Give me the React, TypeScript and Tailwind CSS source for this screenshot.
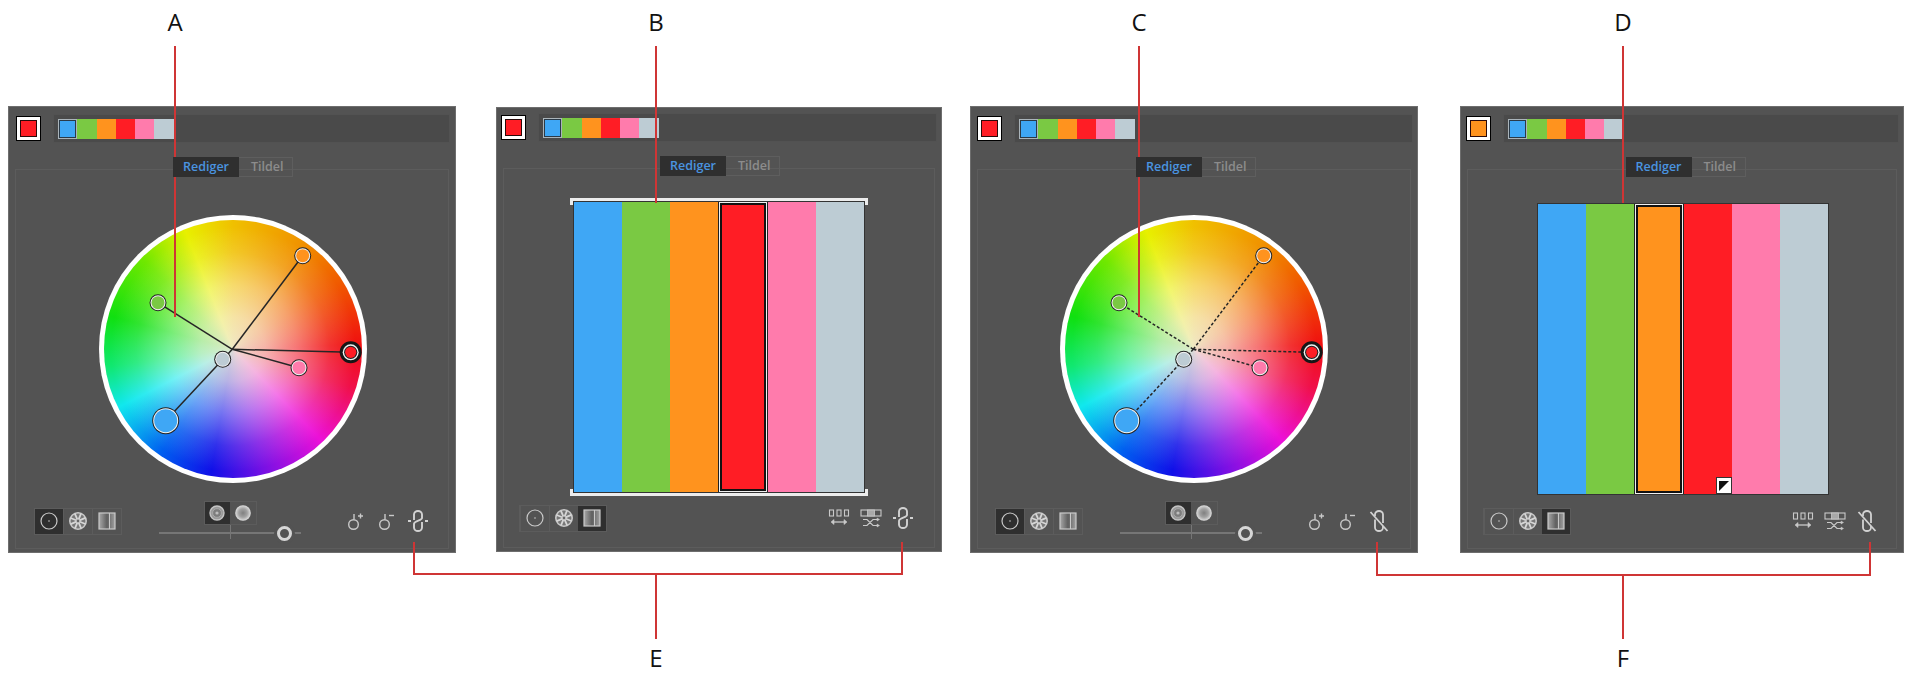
import React from "react";

const BLUE = "#3fa7f5";
const GREEN = "#7ac943";
const ORANGE = "#ff931e";
const RED = "#ff1d25";
const PINK = "#ff7bac";
const GRAY = "#bdccd4";

const swatches = [BLUE, GREEN, ORANGE, RED, PINK, GRAY];
const ICON = "#c9c9c9";

// Wheel handles, in wheel coordinates
const handles = [
  { x: 203.7, y: 40.7, r: 8.5, color: ORANGE },
  { x: 59, y: 87.7, r: 8.5, color: GREEN },
  { x: 200, y: 152.7, r: 8.5, color: PINK },
  { x: 123.7, y: 144.3, r: 8.5, color: GRAY },
  { x: 66.7, y: 205.7, r: 13.5, color: BLUE },
];
const redHandle = { x: 251.7, y: 137.3 };
const hub = { x: 133.3, y: 134.3 };

function ColorWheel({ dashed }: { dashed?: boolean }) {
  const spokes = [...handles.filter((h) => h.color !== GRAY), redHandle];
  return (
    <div className="relative w-[268px] h-[268px] rounded-full bg-white">
      <div className="absolute inset-[5px] rounded-full bg-[radial-gradient(circle_closest-side,rgba(240,236,214,0.92)_0%,rgba(248,242,228,0.72)_25%,rgba(255,255,255,0.42)_50%,rgba(255,255,255,0.14)_75%,rgba(255,255,255,0)_95%),conic-gradient(#f0c000_0deg,#f09400_32deg,#f05a00_58deg,#f01010_88deg,#f0104a_108deg,#ec10d8_136deg,#7a10e4_165deg,#1010e8_190deg,#0060f0_215deg,#10e8ee_243deg,#10e870_262deg,#10e010_285deg,#70e800_315deg,#e8f000_338deg,#f0c000_360deg)]" />
      <svg className="absolute inset-0" width="268" height="268" viewBox="0 0 268 268">
        {spokes.map((s, i) => (
          <line
            key={i}
            x1={hub.x}
            y1={hub.y}
            x2={s.x}
            y2={s.y}
            stroke="#262626"
            strokeWidth="1.5"
            strokeDasharray={dashed ? "3 2" : undefined}
          />
        ))}
        {handles.map((h, i) => (
          <g key={i}>
            <circle cx={h.x} cy={h.y} r={h.r} fill="#222" />
            <circle cx={h.x} cy={h.y} r={h.r - 1} fill="#f2f2f2" />
            <circle cx={h.x} cy={h.y} r={h.r - 2} fill={h.color} />
          </g>
        ))}
        <circle cx={redHandle.x} cy={redHandle.y} r="11" fill="#161616" />
        <circle cx={redHandle.x} cy={redHandle.y} r="8" fill="#f2f2f2" />
        <circle cx={redHandle.x} cy={redHandle.y} r="6.6" fill="#222" />
        <circle cx={redHandle.x} cy={redHandle.y} r="5.6" fill={RED} />
      </svg>
    </div>
  );
}

// ---- small icons ----
function CircleIcon() {
  return (
    <svg width="20" height="20" viewBox="0 0 20 20" fill="none">
      <circle cx="10" cy="10" r="8" stroke={ICON} strokeWidth="1.2" />
      <circle cx="10" cy="10" r="0.8" fill={ICON} />
    </svg>
  );
}

function SegmentIcon() {
  return (
    <svg width="20" height="20" viewBox="0 0 20 20" fill="none">
      <circle cx="10" cy="10" r="8.2" fill="#777" stroke={ICON} strokeWidth="1.6" />
      {[0, 45, 90, 135].map((a) => (
        <line key={a} x1="10" y1="2" x2="10" y2="18" stroke="#d6d6d6" strokeWidth="1.8" transform={`rotate(${a + 22} 10 10)`} />
      ))}
      <circle cx="10" cy="10" r="1.4" fill="#666" />
    </svg>
  );
}

function BarsIcon({ id }: { id: string }) {
  return (
    <svg width="20" height="20" viewBox="0 0 20 20" fill="none">
      <defs>
        <linearGradient id={id} x1="0" x2="1" y1="0" y2="0">
          <stop offset="0" stopColor="#a8a8a8" />
          <stop offset="0.5" stopColor="#5f5f5f" />
          <stop offset="1" stopColor="#a0a0a0" />
        </linearGradient>
      </defs>
      <rect x="2" y="2" width="16" height="16" fill={`url(#${id})`} stroke={ICON} strokeWidth="1.2" />
      <line x1="12.5" y1="2" x2="12.5" y2="18" stroke={ICON} strokeWidth="1" />
    </svg>
  );
}

function AddColorIcon({ minus }: { minus?: boolean }) {
  return (
    <svg width="22" height="22" viewBox="0 0 22 22" fill="none" stroke={ICON}>
      <circle cx="8.5" cy="14.5" r="4.8" strokeWidth="1.4" />
      <line x1="9" y1="9.5" x2="9" y2="4" strokeWidth="1.4" />
      {minus ? (
        <line x1="13" y1="5.5" x2="18" y2="5.5" strokeWidth="1.4" />
      ) : (
        <path d="M13 6h5M15.5 3.5v5" strokeWidth="1.4" />
      )}
    </svg>
  );
}

function LinkIcon({ off }: { off?: boolean }) {
  if (off) {
    return (
      <svg width="22" height="24" viewBox="0 0 22 24" fill="none" stroke="#d2d2d2" strokeWidth="1.8">
        <path d="M7 7V5.5a4 3.5 0 0 1 8 0V14" />
        <path d="M7 10.5v8a4 3.5 0 0 0 8 0V17" />
        <line x1="2.5" y1="3" x2="19.5" y2="22" />
      </svg>
    );
  }
  return (
    <svg width="22" height="24" viewBox="0 0 22 24" fill="none" stroke="#d2d2d2" strokeWidth="1.9">
      <path d="M7 11V5.5a4 3.5 0 0 1 8 0V9c0 2.5-8 3-8 6v3.5a4 3.5 0 0 0 8 0V13" />
      <path d="M1 12h3M18 12h3" strokeWidth="2" />
    </svg>
  );
}

function SpreadIcon() {
  return (
    <svg width="22" height="22" viewBox="0 0 22 22" fill="none" stroke={ICON}>
      <rect x="1.5" y="3" width="4" height="6" strokeWidth="1.1" />
      <rect x="9" y="3" width="4" height="6" strokeWidth="1.1" />
      <rect x="16.5" y="3" width="4" height="6" strokeWidth="1.1" />
      <path d="M5 15h12" strokeWidth="1.3" />
      <path d="M6 12.5 3 15l3 2.5zM16 12.5l3 2.5-3 2.5z" fill={ICON} strokeWidth="0.6" />
    </svg>
  );
}

function ShuffleIcon() {
  return (
    <svg width="22" height="22" viewBox="0 0 22 22" fill="none" stroke={ICON}>
      <rect x="1" y="3" width="20" height="6" strokeWidth="1.1" />
      <rect x="7.5" y="3" width="7" height="6" fill="#a8a8a8" strokeWidth="0.8" />
      <path d="M3 12.5h4l6 6h5M3 18.5h4l6-6h5" strokeWidth="1.2" />
      <path d="M17 11l2.5 1.5L17 14zM17 17l2.5 1.5L17 20z" fill={ICON} strokeWidth="0.5" />
    </svg>
  );
}

function ToneIconA() {
  return (
    <svg width="18" height="18" viewBox="0 0 18 18" fill="none">
      <circle cx="9" cy="9" r="7" fill="#9a9a9a" stroke="#c4c4c4" strokeWidth="1.4" />
      <circle cx="9" cy="9" r="4.4" fill="#7d7d7d" stroke="#a8a8a8" strokeWidth="1" />
      <circle cx="9" cy="9" r="1.6" fill="#bdbdbd" />
    </svg>
  );
}

function ToneIconB() {
  return (
    <svg width="18" height="18" viewBox="0 0 18 18">
      <defs>
        <radialGradient id="toneB">
          <stop offset="0" stopColor="#808080" />
          <stop offset="0.55" stopColor="#a2a2a2" />
          <stop offset="1" stopColor="#e0e0e0" />
        </radialGradient>
      </defs>
      <circle cx="9" cy="9" r="7.8" fill="url(#toneB)" />
    </svg>
  );
}

function ModeGroup({ active, id }: { active: number; id: string }) {
  const items = [<CircleIcon />, <SegmentIcon />, <BarsIcon id={id} />];
  return (
    <div className="flex w-[88px] h-[27px] border border-[#5c5c5c]">
      {items.map((icon, i) => (
        <div
          key={i}
          className={`flex-1 flex items-center justify-center ${active === i ? "bg-[#2f2f2f]" : "border-l border-[#5c5c5c]"}`}
        >
          {icon}
        </div>
      ))}
    </div>
  );
}

function HarmonyControls() {
  return (
    <div className="w-[142px] ml-[37px] flex flex-col items-center">
      <div className="flex w-[53px] h-[24px] border border-[#5c5c5c]">
        <div className="w-[25px] bg-[#2f2f2f] flex items-center justify-center">
          <ToneIconA />
        </div>
        <div className="flex-1 flex items-center justify-center">
          <ToneIconB />
        </div>
      </div>
      <div className="relative w-full h-[16px] flex items-center">
        <div className="w-full h-[2px] bg-[#767676]" />
        <div className="absolute left-[71px] top-0 w-[1px] h-[14px] bg-[#767676]" />
        <div className="absolute left-[118px] top-[1px] w-[15px] h-[15px] rounded-full border-[3px] border-[#d6d6d6] bg-[#535353] shadow-[0_0_0_3px_#535353]" />
      </div>
    </div>
  );
}

type PanelProps = {
  mode: "wheel" | "bars";
  id: string;
  current: string;
  active?: number; // selected bar
  outlined?: boolean;
  off?: boolean;
  panelClass: string;
  tabsClass: string;
  bodyClass: string;
  footClass: string;
  headClass: string;
  dashed?: boolean;
  baseChip?: boolean;
};

function Panel(p: PanelProps) {
  return (
    <div className={`flex flex-col bg-[#535353] border border-[#6e6e6e] ${p.panelClass}`}>
      {/* Top row: current colour and colour strip */}
      <div className={`flex items-center ${p.headClass}`}>
        <div className="w-[25px] h-[25px] shrink-0 border border-black bg-white p-[3px]">
          <div className="w-full h-full border border-[#2a0a0a]" style={{ background: p.current }} />
        </div>
        <div className="ml-[12px] flex-1 h-[29px] bg-[#4a4a4a] border border-[#525252] flex items-center pl-[4px]">
          {swatches.map((c, i) => (
            <div
              key={c}
              className={`w-[19.3px] h-[20px] ${i === 0 ? "border border-[#aab4ba] shadow-[inset_0_0_0_1px_#2a3a48]" : ""}`}
              style={{ background: c }}
            />
          ))}
        </div>
      </div>

      {/* Tabs */}
      <div className={`flex justify-center mt-[14px] relative z-10 ${p.tabsClass}`}>
        <div className="w-[66px] h-[20px] bg-[#2f2f2f] pl-[10px] text-[12.5px] leading-[20px] font-semibold text-[#4a94e0] font-['Open_Sans',sans-serif]">
          Rediger
        </div>
        <div className="w-[54px] h-[20px] border border-[#5e5e5e] border-l-0 pl-[12px] text-[12.5px] leading-[18px] font-semibold text-[#8c8c8c] font-['Open_Sans',sans-serif]">
          Tildel
        </div>
      </div>

      {/* Body */}
      <div className="mx-[6px] mt-[-8px] mb-[3px] flex-1 border border-[#5c5c5c] flex flex-col">
        <div className={`flex justify-center ${p.bodyClass}`}>
          {p.mode === "wheel" ? (
            <ColorWheel dashed={p.dashed} />
          ) : (
            <div className="relative">
              {p.outlined && (
                <>
                  <div className="absolute -left-[4px] -right-[4px] -top-[4px] h-[7px] border-t-[3px] border-x-[3px] border-[#ececec]" />
                  <div className="absolute -left-[4px] -right-[4px] -bottom-[4px] h-[7px] border-b-[3px] border-x-[3px] border-[#ececec]" />
                </>
              )}
              <div className="relative flex w-[290px] h-[290px] outline outline-[#333]">
                {swatches.map((c, i) =>
                  p.active === i ? (
                    <div key={c} className="flex-1 bg-[#222] pl-[1px] pr-[1px]">
                      <div className="h-full border border-[#f0f0f0]">
                        <div className="h-full border-2 border-[#111]" style={{ background: c }} />
                      </div>
                    </div>
                  ) : (
                    <div key={c} className="relative flex-1" style={{ background: c }}>
                      {p.baseChip && i === 3 && (
                        <div className="absolute right-0 bottom-0 w-[16px] h-[17px] bg-white border border-[#333] flex items-center justify-center">
                          <svg width="10" height="10" viewBox="0 0 10 10">
                            <path d="M0 0h10L0 10z" fill="#111" />
                          </svg>
                        </div>
                      )}
                    </div>
                  )
                )}
              </div>
            </div>
          )}
        </div>

        {/* Footer */}
        <div className={`flex items-center h-[40px] ${p.footClass}`}>
          <ModeGroup active={p.mode === "wheel" ? 0 : 2} id={`bars-${p.id}`} />
          {p.mode === "wheel" && <HarmonyControls />}
          <div className={`ml-auto flex items-center ${p.mode === "wheel" ? "gap-[9px]" : "gap-[10px]"}`}>
            {p.mode === "wheel" ? (
              <>
                <AddColorIcon />
                <AddColorIcon minus />
              </>
            ) : (
              <>
                <SpreadIcon />
                <ShuffleIcon />
              </>
            )}
            <LinkIcon off={p.off} />
          </div>
        </div>
      </div>
    </div>
  );
}

function Callouts() {
  const c = "#cf3535";
  return (
    <svg className="absolute inset-0 pointer-events-none" width="1920" height="681" viewBox="0 0 1920 681" fill="none" stroke={c} strokeWidth="2">
      <path d="M175 46V317" />
      <path d="M656 46V203" />
      <path d="M1139 46V317" />
      <path d="M1623 46V203" />
      <path d="M414 542V574H902V542M656 574V639" />
      <path d="M1377 542V575H1870V542M1623 575V639" />
    </svg>
  );
}

const labelClass = "absolute -translate-x-1/2 text-2xl leading-none text-[#111] font-['Open_Sans',sans-serif]";

export default function App() {
  return (
    <div className="relative w-[1920px] h-[681px] bg-white overflow-hidden">
      <div className="flex items-start pt-[106px] pl-[8px]">
        <Panel
          id="a"
          mode="wheel"
          current={RED}
          panelClass="w-[448px] h-[447px]"
          headClass="pt-[7px] pl-[7px] pr-[5px]"
          tabsClass="pl-[2px]"
          bodyClass="pt-[45px] pl-[2px]"
          footClass="mt-[18px] pl-[18px] pr-[19px]"
        />
        <Panel
          id="b"
          mode="bars"
          current={RED}
          active={3}
          outlined
          panelClass="w-[446px] h-[445px] ml-[40px] mt-[1px]"
          headClass="pt-[5px] pl-[4px] pr-[4px]"
          tabsClass="pl-[2px]"
          bodyClass="pt-[33px]"
          footClass="mt-[6px] pl-[15px] pr-[20px]"
        />
        <Panel
          id="c"
          mode="wheel"
          dashed
          off
          current={RED}
          panelClass="w-[448px] h-[447px] ml-[28px]"
          headClass="pt-[7px] pl-[6px] pr-[4px]"
          tabsClass="pl-[4px]"
          bodyClass="pt-[45px]"
          footClass="mt-[18px] pl-[17px] pr-[20px]"
        />
        <Panel
          id="d"
          mode="bars"
          off
          current={ORANGE}
          active={2}
          baseChip
          panelClass="w-[444px] h-[447px] ml-[42px]"
          headClass="pt-[7px] pl-[5px] pr-[4px]"
          tabsClass="pl-[7px]"
          bodyClass="pt-[34px] pl-[2px]"
          footClass="mt-[7px] pl-[15px] pr-[18px]"
        />
      </div>

      <Callouts />

      <span className={`${labelClass} left-[175px] top-[10px]`}>A</span>
      <span className={`${labelClass} left-[656px] top-[10px]`}>B</span>
      <span className={`${labelClass} left-[1139px] top-[10px]`}>C</span>
      <span className={`${labelClass} left-[1623px] top-[10px]`}>D</span>
      <span className={`${labelClass} left-[656px] top-[646px]`}>E</span>
      <span className={`${labelClass} left-[1623px] top-[646px]`}>F</span>
    </div>
  );
}
